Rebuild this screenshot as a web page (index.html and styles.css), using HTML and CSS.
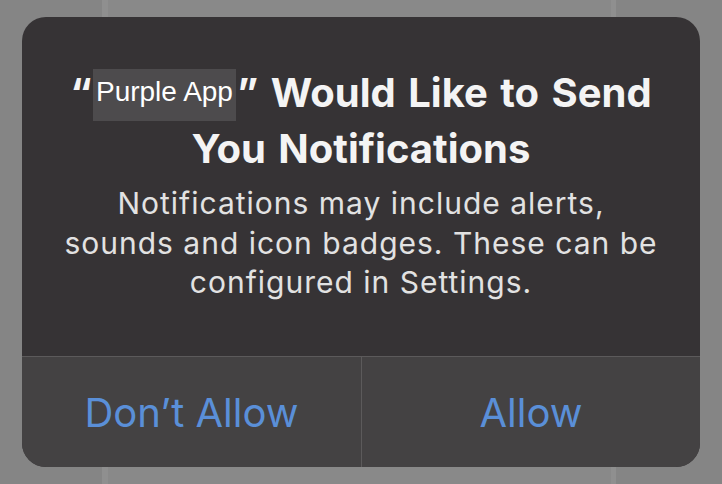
FILE: index.html
```html
<!DOCTYPE html>
<html lang="en">
<head>
<meta charset="utf-8">
<title>Notification permission</title>
<link rel="stylesheet" href="styles.css">
</head>
<body>
<div class="screen">
  <div class="alert">
    <div class="content">
      <h1 class="title"><span class="q">“</span><span class="app">Purple App</span><span class="q">”</span> Would Like to Send<br>You Notifications</h1>
      <p class="msg">Notifications may include alerts,<br>sounds and icon badges. These can be<br>configured in Settings.</p>
    </div>
    <div class="actions">
      <button class="btn">Don’t Allow</button>
      <button class="btn">Allow</button>
    </div>
  </div>
</div>
</body>
</html>
```
FILE: styles.css
```css
html, body {
  margin: 0;
  padding: 0;
}
body {
  width: 722px;
  height: 484px;
  overflow: hidden;
  background: linear-gradient(to right,
    #858585 0, #858585 102px,
    #8f8f8f 102px, #8f8f8f 108px,
    #898989 108px, #898989 611px,
    #8f8f8f 611px, #8f8f8f 616px,
    #858585 616px);
  font-family: Inter, "Liberation Sans", sans-serif;
}
.screen {
  padding: 17px 22px 0 22px;
}
.alert {
  width: 678px;
  height: 450px;
  border-radius: 24px;
  overflow: hidden;
  display: flex;
  flex-direction: column;
  background: #363335;
}
.content {
  height: 339px;
  box-sizing: border-box;
  padding-top: 48px;
  text-align: center;
  color: #fff;
}
.title {
  margin: 0;
  font-size: 40px;
  font-weight: 700;
  line-height: 56px;
  word-spacing: 3px;
  color: #f4f4f4;
}
.q {
  font-weight: 700;
}
.app {
  display: inline-block;
  background: #4d4b4d;
  color: #fff;
  font-family: "Liberation Sans", Arial, sans-serif;
  font-weight: 400;
  font-size: 28px;
  line-height: 46px;
  height: 46px;
  word-spacing: 0;
  padding: 0 3px 6px 3px;
  margin: 0 1px;
  vertical-align: 6px;
}
.msg {
  margin: 7px 0 0 0;
  font-size: 30px;
  letter-spacing: 1px;
  line-height: 39.5px;
  color: #e2e2e2;
  font-weight: 400;
}
.actions {
  flex: 1;
  display: grid;
  grid-template-columns: 1fr 1fr;
  border-top: 1px solid #5c5a5b;
  background: #444243;
}
.btn {
  border: 0;
  background: transparent;
  font-family: Inter, "Liberation Sans", sans-serif;
  font-size: 40px;
  font-weight: 400;
  color: #5a8fd8;
  padding: 0;
  margin: 0;
}
.btn + .btn {
  border-left: 1px solid #5c5a5b;
}
```
